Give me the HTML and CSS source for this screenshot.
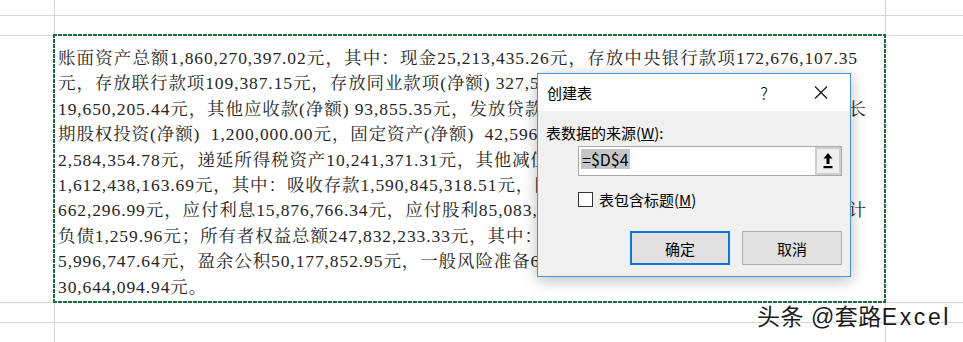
FILE: index.html
```html
<!DOCTYPE html>
<html lang="zh-CN">
<head>
<meta charset="UTF-8">
<meta name="viewport" content="width=device-width, initial-scale=1.0">
<title>创建表</title>
<link rel="stylesheet" href="styles.css">
</head>
<body>
<div id="sheet">
  <div class="cell"></div><div class="cell"></div><div class="cell"></div>
  <div class="cell"></div><div class="cell"></div><div class="cell"></div>
  <div class="cell"></div>
  <div class="cell" id="marquee">
    <div class="ln fill">账面资产总额1,860,270,397.02元，其中：现金25,213,435.26元，存放中央银行款项172,676,107.35</div>
    <div class="ln">元，存放联行款项109,387.15元，存放同业款项(净额) 327,5</div>
    <div class="ln split"><span>19,650,205.44元，其他应收款(净额) 93,855.35元，发放贷款</span><span>长</span></div>
    <div class="ln">期股权投资(净额)&nbsp; 1,200,000.00元，固定资产(净额)&nbsp; 42,596,3</div>
    <div class="ln">2,584,354.78元，递延所得税资产10,241,371.31元，其他减值</div>
    <div class="ln">1,612,438,163.69元，其中：吸收存款1,590,845,318.51元，同</div>
    <div class="ln split"><span>662,296.99元，应付利息15,876,766.34元，应付股利85,083,</span><span>计</span></div>
    <div class="ln">负债1,259.96元；所有者权益总额247,832,233.33元，其中：实</div>
    <div class="ln">5,996,747.64元，盈余公积50,177,852.95元，一般风险准备6</div>
    <div class="ln">30,644,094.94元。</div>
  </div>
  <div class="cell"></div>
  <div class="cell"></div><div class="cell"></div><div class="cell"></div>
  <div class="cell"></div><div class="cell"></div><div class="cell"></div>

  <div id="dialog">
    <div class="titlebar">
      <span class="title">创建表</span>
      <span class="help">?</span>
      <span class="close">
        <svg width="14" height="13" viewBox="0 0 14 13"><path d="M1 0.5 L13 12.5 M13 0.5 L1 12.5" stroke="#111" stroke-width="1.1" fill="none"/></svg>
      </span>
    </div>
    <div class="dlg-body">
      <div class="label">表数据的来源(<u>W</u>):</div>
      <div class="src">
        <div class="val"><span class="sel">=$D$4</span></div>
        <div class="pick">
          <svg width="10" height="16" viewBox="0 0 10 16"><path d="M5 0 L9.5 5.5 H0.5 Z" fill="#000"/><rect x="3.5" y="5" width="3" height="6" fill="#000"/><rect x="0.5" y="13" width="9" height="2.2" fill="#000"/></svg>
        </div>
      </div>
      <div class="check-row">
        <span class="box"></span>
        <span>表包含标题(<u>M</u>)</span>
      </div>
      <div class="buttons">
        <button class="btn ok">确定</button>
        <button class="btn">取消</button>
      </div>
    </div>
  </div>

  <div id="watermark">头条 @套路<span>Excel</span></div>
</div>
</body>
</html>
```

FILE: styles.css
```css
* {
  box-sizing: border-box;
}
body {
  margin: 0;
  background-color: #fff;
  overflow: hidden;
}
#sheet {
  position: relative;
  width: 963px;
  height: 342px;
  display: grid;
  grid-template-columns: 55px 831px 1fr;
  grid-template-rows: 16px 20px 267px 20px 1fr;
  overflow: hidden;
}
.cell {
  border-right: 1px solid #d6d6d6;
  border-bottom: 1px solid #d6d6d6;
}
.cell:nth-child(3n) {
  border-right: none;
}
.cell:nth-child(n+13) {
  border-bottom: none;
}
#marquee {
  margin: -2px 0 0 -2px;
  border: none;
  padding: 12px 0 0 5px;
  background:
    repeating-linear-gradient(90deg, #1d6a3f 0 4px, #fff 4px 5px) top / 100% 2px no-repeat,
    repeating-linear-gradient(90deg, #1d6a3f 0 4px, #fff 4px 5px) bottom / 100% 2px no-repeat,
    repeating-linear-gradient(180deg, #1d6a3f 0 4px, #fff 4px 5px) left / 2px 100% no-repeat,
    repeating-linear-gradient(180deg, #1d6a3f 0 4px, #fff 4px 5px) right / 2px 100% no-repeat,
    #fff;
  font-family: "Liberation Serif", "Noto Serif CJK SC", "Noto Sans CJK SC", serif;
  font-size: 17.5px;
  letter-spacing: 0.9px;
  line-height: 25.4px;
  color: #262626;
}
.ln {
  white-space: nowrap;
}
.fill {
  width: 800px;
  text-align: justify;
  text-align-last: justify;
}
.split {
  width: 809px;
  display: flex;
  justify-content: space-between;
}

/* dialog */
#dialog {
  position: absolute;
  left: 537px;
  top: 73px;
  width: 314px;
  height: 204px;
  border: 1px solid #4d93d9;
  background-color: #f0f0f0;
  box-shadow: 0 3px 14px rgba(0, 0, 0, 0.28);
  font-family: "Noto Sans CJK SC", "Liberation Sans", sans-serif;
  font-size: 15px;
  color: #000;
}
.titlebar {
  height: 37px;
  background-color: #fff;
  display: flex;
  align-items: center;
  padding-left: 9px;
}
.title {
  flex: 1;
}
.help {
  width: 20px;
  margin-right: 34px;
  text-align: center;
  font-size: 17px;
  font-weight: 300;
}
.close {
  width: 26px;
  margin-right: 16px;
  display: flex;
  justify-content: center;
}
.dlg-body {
  padding: 12px 8px 0 8px;
}
.label {
  line-height: 20px;
}
.src {
  margin: 3px 0 0 32px;
  width: 264px;
  height: 30px;
  border: 1px solid #a9a9a9;
  background-color: #fff;
  display: flex;
}
.val {
  flex: 1;
  padding: 2px 0 0 2px;
}
.sel {
  display: inline-block;
  background-color: #c6c6c6;
  font-size: 16px;
  line-height: 20px;
  padding: 0 1px;
}
.pick {
  width: 26px;
  border: 2px solid #cdcdcd;
  background-color: #efefef;
  display: flex;
  align-items: center;
  justify-content: center;
}
.check-row {
  margin: 13px 0 0 32px;
  height: 20px;
  display: flex;
  align-items: center;
}
.box {
  width: 15px;
  height: 15px;
  border: 1px solid #333;
  background-color: #fff;
  margin-right: 6px;
}
.buttons {
  margin-top: 22px;
  display: flex;
  justify-content: flex-end;
  gap: 12px;
}
.btn {
  width: 100px;
  height: 34px;
  border: 1px solid #adadad;
  background-color: #e1e1e1;
  font-family: inherit;
  font-size: 15px;
  color: #000;
  padding: 0;
}
.btn.ok {
  border: 2px solid #0a78d2;
}

/* watermark */
#watermark {
  position: absolute;
  left: 757px;
  top: 305px;
  font-family: "Liberation Sans", "Noto Sans CJK SC", sans-serif;
  font-size: 23px;
  line-height: 24px;
  letter-spacing: 0.5px;
  color: #1a1a1a;
  white-space: nowrap;
  text-shadow: 0 0 2px #fff, 0 0 2px #fff, 1px 1px 1px #fff;
}
#watermark span {
  letter-spacing: 2.6px;
}
```
